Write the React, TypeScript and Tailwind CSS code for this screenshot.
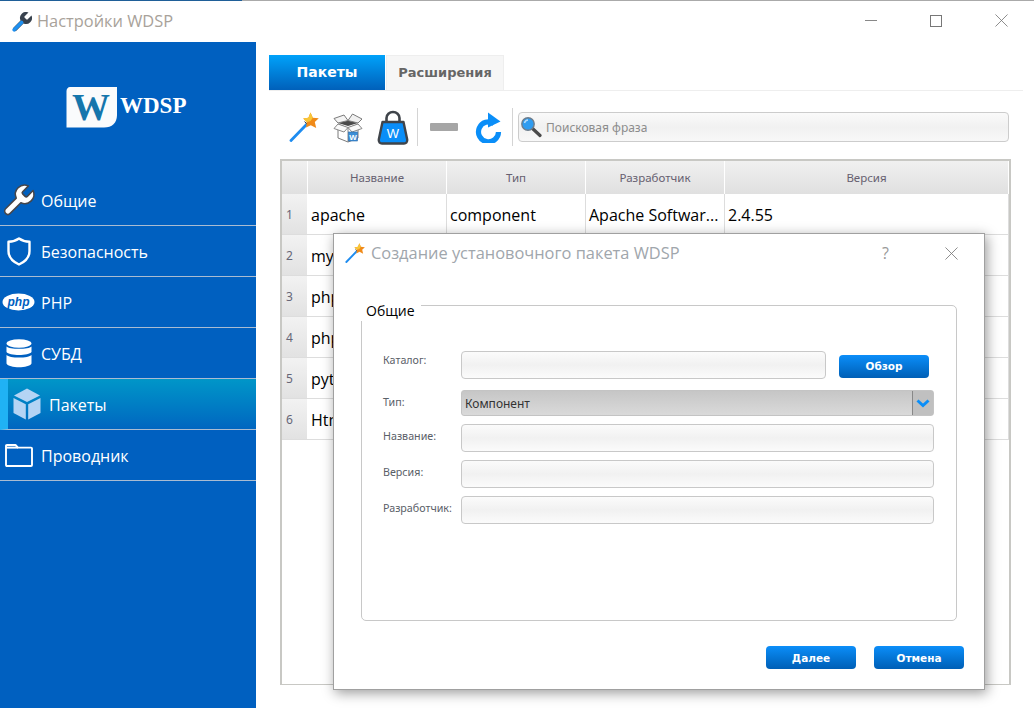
import type { ReactNode } from "react";

const uiFont = "[font-family:'Open_Sans','Noto_Sans',sans-serif]";
const smallFont = "[font-family:'Noto_Sans',sans-serif]";
const boldFont = "[font-family:'DejaVu_Sans',sans-serif]";

const wrenchPath =
  "M14.7 6.3a1 1 0 0 0 0 1.4l1.6 1.6a1 1 0 0 0 1.4 0l3.77-3.77a6 6 0 0 1-7.94 7.94l-6.91 6.91a2.12 2.12 0 0 1-3-3l6.91-6.91a6 6 0 0 1 7.94-7.94l-3.76 3.76z";

function WrenchSmall() {
  return (
    <svg width="20" height="20" viewBox="2 2 20 20">
      <path d={wrenchPath} fill="#38424e" />
      <path d="M4.2 19.8 L11.6 12.4" stroke="#1e90f0" strokeWidth="3.6" strokeLinecap="round" />
    </svg>
  );
}

function WrenchNav() {
  return (
    <svg width="37" height="37" viewBox="0 0 24 24">
      <path d={wrenchPath} fill="#fff" stroke="#44464c" strokeWidth="1" strokeLinejoin="round" />
    </svg>
  );
}

function ShieldIcon() {
  return (
    <svg width="24" height="29" viewBox="0 0 24 29">
      <path d="M12 1.5 C15 3.6 18.5 4.6 22.5 4.8 V14 C22.5 20.5 18 24.8 12 27.5 C6 24.8 1.5 20.5 1.5 14 V4.8 C5.5 4.6 9 3.6 12 1.5 Z" fill="none" stroke="#fff" strokeWidth="2.4" strokeLinejoin="round" />
    </svg>
  );
}

function PhpIcon() {
  return (
    <svg width="33" height="18" viewBox="0 0 33 18">
      <ellipse cx="16.5" cy="9" rx="16" ry="8.5" fill="#fff" />
      <text x="16.5" y="12.6" textAnchor="middle" fontFamily="'Liberation Sans',sans-serif" fontWeight="700" fontStyle="italic" fontSize="12" fill="#0060c0">php</text>
    </svg>
  );
}

function DbIcon() {
  return (
    <svg width="26" height="29" viewBox="0 0 26 29" fill="#fff">
      <ellipse cx="13" cy="4.5" rx="12.5" ry="4.2" />
      <path d="M0.5 7.5 C3 10.6 23 10.6 25.5 7.5 V13 C23 17 3 17 0.5 13 Z" />
      <path d="M0.5 16 C3 19.4 23 19.4 25.5 16 V24.5 C23 29.5 3 29.5 0.5 24.5 Z" />
    </svg>
  );
}

function CubeIcon() {
  return (
    <svg width="28" height="32" viewBox="0 0 28 32" fill="#b4d4f4">
      <path d="M14 0.5 L27 7.5 L14 14 L1 7.5 Z" />
      <path d="M0.5 10 L12.8 16.2 V31.5 L0.5 25 Z" />
      <path d="M27.5 10 L15.2 16.2 V31.5 L27.5 25 Z" />
    </svg>
  );
}

function FolderIcon() {
  return (
    <svg width="28" height="23" viewBox="0 0 28 23">
      <path d="M1 4 V2 Q1 1 2 1 H10.5 L13 3.6 H26 Q27 3.6 27 4.6 V21 Q27 22 26 22 H2 Q1 22 1 21 Z" fill="none" stroke="#fff" strokeWidth="1.9" strokeLinejoin="round" />
      <path d="M1 3.6 H13" stroke="#fff" strokeWidth="2" />
    </svg>
  );
}

function WandIcon({ size }: { size: number }) {
  return (
    <svg width={size} height={size} viewBox="0 0 30 30">
      <path d="M2 28.5 L18 12" stroke="#1e8cf0" strokeWidth="2.8" strokeLinecap="round" />
      <path d="M18.2 12.2 L15.5 9.6" stroke="#33383e" strokeWidth="1" />
      <path d="M21.5 0.5 L23.8 5.8 L29.8 6.2 L25.8 10 L27.2 16 L21.8 13.2 L17 15.6 L17.8 10.2 L14.2 6.6 L19.4 5.8 Z" fill="#f08a18" />
      <path d="M21.5 0.5 L23.8 5.8 L21.6 9 L17.8 10.2 L14.2 6.6 L19.4 5.8 Z" fill="#f8c638" />
    </svg>
  );
}

function BoxIcon() {
  return (
    <svg width="30" height="33" viewBox="0 0 30 33">
      <path d="M5 13 L15 17 L25 13 V27 L15 31 L5 27 Z" fill="#fff" stroke="#7a7a7a" strokeWidth="1" />
      <path d="M15 17 V31" stroke="#8a8a8a" strokeWidth="1" />
      <path d="M5 12 L15 9.5 L25 12 L15 15 Z" fill="#4a4a4a" />
      <path d="M5 12 L1 7.5 L11 4 L15 9.5 Z" fill="#f4f4f4" stroke="#7a7a7a" strokeWidth="1" />
      <path d="M25 12 L29 8 L19.5 3 L15 9.5 Z" fill="#f0f0f0" stroke="#7a7a7a" strokeWidth="1" />
      <path d="M5 13 L1 17.5 L11 21 L15 16.5 Z" fill="#fafafa" stroke="#8a8a8a" strokeWidth="1" />
      <path d="M25 13 L29 17.5 L19 21 L15 16.5 Z" fill="#fafafa" stroke="#8a8a8a" strokeWidth="1" />
      <rect x="15.5" y="21" width="9" height="9" fill="#3d8ed6" stroke="#2a6aa8" strokeWidth="0.6" />
      <text x="20" y="28.5" textAnchor="middle" fontFamily="'Liberation Sans',sans-serif" fontWeight="700" fontSize="8" fill="#fff">W</text>
    </svg>
  );
}

function BagIcon() {
  return (
    <svg width="32" height="35" viewBox="0 0 32 35">
      <path d="M9.5 13 V8 C9.5 4.5 12.5 2 16 2 C19.5 2 22.5 4.5 22.5 8 V13" fill="none" stroke="#3f444a" strokeWidth="2.6" />
      <path d="M5.5 12 H26.5 L30.2 29.5 C30.6 32 29 33.5 27 33.5 H5 C3 33.5 1.4 32 1.8 29.5 Z" fill="#0a8ef8" stroke="#3f444a" strokeWidth="2.4" strokeLinejoin="round" />
      <text x="16" y="28" textAnchor="middle" fontFamily="'Liberation Sans',sans-serif" fontWeight="400" fontSize="13" fill="#fff">W</text>
    </svg>
  );
}

function RefreshIcon() {
  return (
    <svg width="29" height="31" viewBox="0 0 29 31">
      <path d="M20 11.5 A10 10 0 1 0 24.5 20" fill="none" stroke="#0a8ef8" strokeWidth="5.2" />
      <path d="M14 0.5 L26.5 9.5 L14 15.5 Z" fill="#0a8ef8" />
    </svg>
  );
}

function SearchIcon() {
  return (
    <svg width="22" height="22" viewBox="0 0 22 22">
      <path d="M12.5 12.5 L20 19.5" stroke="#4a4a4a" strokeWidth="3.2" strokeLinecap="round" />
      <circle cx="8" cy="8" r="6.2" fill="#2f9cf0" stroke="#6d7d8c" strokeWidth="1.4" />
      <path d="M4.5 7 A4 4 0 0 1 8 4" fill="none" stroke="#b5dcfa" strokeWidth="1.4" />
    </svg>
  );
}

function CloseGlyph({ size }: { size: number }) {
  return (
    <svg width={size} height={size} viewBox="0 0 14 14">
      <path d="M0.5 0.5 L13.5 13.5 M13.5 0.5 L0.5 13.5" stroke="#777" strokeWidth="0.9" />
    </svg>
  );
}

function Logo() {
  return (
    <svg width="52" height="41" viewBox="0 0 52 41">
      <path d="M4 0 H51 V28 C51 36 46 40.5 38 40.5 H0.5 V4 C0.5 2 2 0 4 0 Z" fill="#fafbfc" />
      <text x="25" y="33" textAnchor="middle" fontFamily="'Liberation Serif',serif" fontWeight="700" fontSize="38" fill="#1576ac">W</text>
    </svg>
  );
}

const navItems: { label: string; icon: ReactNode; active?: boolean }[] = [
  { label: "Общие", icon: <WrenchNav /> },
  { label: "Безопасность", icon: <ShieldIcon /> },
  { label: "PHP", icon: <PhpIcon /> },
  { label: "СУБД", icon: <DbIcon /> },
  { label: "Пакеты", icon: <CubeIcon />, active: true },
  { label: "Проводник", icon: <FolderIcon /> },
];

// only the first row is fully visible, the rest sit behind the dialog
const rows = [
  ["apache", "component", "Apache Softwar...", "2.4.55"],
  ["mysql", "", "", ""],
  ["php", "", "", ""],
  ["phpmyadmin", "", "", ""],
  ["python", "", "", ""],
  ["Htmleditor", "", "", ""],
];

const columns = ["Название", "Тип", "Разработчик", "Версия"];

function Input({ className }: { className: string }) {
  return <div className={`h-[28px] rounded-[4px] border border-[#c8c8c8] bg-gradient-to-b from-[#fbfbfb] via-[#f1f1f1] to-[#fbfbfb] ${className}`} />;
}

function BlueButton({ label }: { label: string }) {
  return (
    <button className={`flex h-[23px] w-[90px] items-center justify-center rounded-[4px] bg-gradient-to-b from-[#0c8ef9] to-[#005fb6] pt-[2px] text-[10.5px] font-bold text-white ${boldFont}`}>
      {label}
    </button>
  );
}

function FormLabel({ label, up }: { label: string; up: string }) {
  return <span className={`w-[78px] text-[10.7px] text-[#5a6068] ${smallFont} ${up}`}>{label}</span>;
}

export default function App() {
  return (
    <div className={`relative flex h-[708px] w-[1034px] flex-col overflow-hidden bg-white ${uiFont}`}>
      {/* Window frame top line */}
      <div className="flex h-px shrink-0 bg-[#aaaaaa]">
        <div className="w-[242px] bg-[#1f5f98]" />
      </div>

      {/* Title bar */}
      <header className="flex h-[41px] shrink-0 items-center pl-[12px]">
        <WrenchSmall />
        <span className="ml-[5px] text-[16.4px] text-[#a8a29a]">Настройки WDSP</span>
        <div className="ml-auto flex items-center pb-[2px] pr-[26px]">
          <div className="h-px w-[12px] bg-[#888]" />
          <div className="ml-[53px] h-[12px] w-[12px] border border-[#777]" />
          <div className="ml-[53px]"><CloseGlyph size={13} /></div>
        </div>
      </header>

      <div className="flex min-h-0 flex-1">
        {/* Sidebar */}
        <aside className="w-[256px] shrink-0 bg-[#0060c0]">
          <div className="flex h-[133px] items-start justify-start pl-[66px] pt-[45px]">
            <Logo />
            <span className="ml-[2px] mt-[4px] text-[23px] font-bold leading-[30px] text-white [font-family:'Liberation_Serif',serif]">WDSP</span>
          </div>
          <nav>
            {navItems.map((item) => (
              <div
                key={item.label}
                className={
                  item.active
                    ? "flex h-[51px] items-center border-b border-[#a9bcd2] border-l-[8px] border-l-[#20b2f4] bg-gradient-to-b from-[#0096c8] to-[#0066c0]"
                    : "flex h-[51px] items-center border-b border-[#a9bcd2]"
                }
              >
                <div className={item.active ? "mr-[3px] flex w-[38px] justify-center" : "mr-[4px] flex w-[37px] justify-center"}>{item.icon}</div>
                <span className="pt-[2px] text-[16px] text-white">{item.label}</span>
              </div>
            ))}
          </nav>
        </aside>

        {/* Main */}
        <main className="min-w-0 flex-1 pl-[13px] pt-[13px]">
          <div className="flex h-[36px] w-[754px] border-b border-[#eeeeee]">
            <div className={`flex h-[35px] w-[116px] items-center justify-center bg-gradient-to-b from-[#00a2fa] to-[#0060ba] text-[14px] font-bold text-white ${boldFont}`}>Пакеты</div>
            <div className={`ml-px flex h-[35px] w-[118px] items-center justify-center border border-b-0 border-[#eeeeee] bg-[#f6f6f6] text-[13px] font-bold text-[#666] ${boldFont}`}>Расширения</div>
          </div>

          {/* Toolbar */}
          <div className="ml-[20px] mt-[17px] flex h-[38px] items-center">
            <WandIcon size={30} />
            <div className="ml-[14px]"><BoxIcon /></div>
            <div className="ml-[14px]"><BagIcon /></div>
            <div className="ml-[8px] h-[38px] w-px bg-[#d4d4d4]" />
            <div className="ml-[12px] h-[8px] w-[28px] rounded-[1px] bg-[#a6a6a6]" />
            <div className="ml-[16px]"><RefreshIcon /></div>
            <div className="ml-[9px] h-[38px] w-px bg-[#d4d4d4]" />
            <div className="ml-[5px] flex h-[30px] w-[491px] items-center rounded-[4px] border border-[#cccccc] bg-gradient-to-b from-[#fafafa] via-[#f1f1f1] to-[#f8f8f8] pl-[1px]">
              <SearchIcon />
              <span className={`ml-[4px] pt-[1px] text-[12px] text-[#8c8c8c] ${smallFont}`}>Поисковая фраза</span>
            </div>
          </div>

          {/* Table */}
          <div className="ml-[11px] mt-[13px] h-[526px] w-[731px] border-2 border-b border-[#c8c8c4]">
            <div className="grid h-[33px] grid-cols-[26px_139px_139px_139px_1fr]">
              <div className="border-r border-white bg-gradient-to-b from-[#f0f0f0] to-[#e0e0e0]" />
              {columns.map((col) => (
                <div key={col} className={`flex items-center justify-center border-r border-white bg-gradient-to-b from-[#f0f0f0] to-[#e0e0e0] pt-[1px] text-[11.5px] text-[#666070] ${smallFont}`}>
                  {col}
                </div>
              ))}
            </div>
            {rows.map((row, i) => (
              <div key={row[0]} className="grid h-[41px] grid-cols-[26px_139px_139px_139px_1fr] border-b border-[#dddddd]">
                <div className={`flex items-center border-r border-white bg-gradient-to-b from-[#f2f2f2] to-[#e2e2e2] pl-[4px] pt-[2px] text-[12px] text-[#667] ${smallFont}`}>{i + 1}</div>
                {row.map((cell, j) => (
                  <div key={j} className="flex items-center truncate border-r border-[#dddddd] pl-[3px] pt-[2px] text-[16px] text-black">
                    {cell}
                  </div>
                ))}
              </div>
            ))}
          </div>
        </main>
      </div>

      {/* Dialog */}
      <div className="absolute left-[333px] top-[233px] flex h-[457px] w-[652px] flex-col border border-[#a0a0a0] bg-white shadow-[2px_3px_12px_rgba(0,0,0,0.4)]">
        <div className="flex h-[40px] shrink-0 items-center pb-[2px] pl-[11px]">
          <WandIcon size={20} />
          <span className="ml-[6px] text-[16.4px] text-[#a0a6ac]">Создание установочного пакета WDSP</span>
          <span className="ml-auto text-[16px] text-[#999]">?</span>
          <div className="ml-[56px] mr-[26px]"><CloseGlyph size={13} /></div>
        </div>

        <div className="relative mx-[27px] mt-[31px] h-[316px] w-[596px] rounded-[5px] border border-[#c8c8c8] pl-[21px] pt-[45px]">
          <span className="absolute left-[-1px] top-[-5px] bg-white pl-[5px] pr-[6px] text-[14px] leading-[20px] text-black">Общие</span>

          <div className="flex h-[28px] items-center">
            <FormLabel label="Каталог:" up="-mt-[10px]" />
            <Input className="w-[365px]" />
            <div className="ml-[13px] mt-[2px]"><BlueButton label="Обзор" /></div>
          </div>

          <div className="mt-[11px] flex h-[26px] items-center">
            <FormLabel label="Тип:" up="-mt-[2px]" />
            <div className={`flex h-[26px] w-[473px] items-center rounded-[3px] border border-[#c4c4c4] bg-gradient-to-b from-[#c6c6c6] to-[#dadada] pl-[3px] text-[12px] text-[#333] ${smallFont}`}>
              <span className="pt-[2px]">Компонент</span>
              <div className="ml-auto flex h-full w-[21px] items-center justify-center border-l border-[#888] bg-[#c0c0c0]">
                <svg width="14" height="9" viewBox="0 0 14 9"><path d="M1.5 1.5 L7 6.5 L12.5 1.5" fill="none" stroke="#0a8ef8" strokeWidth="3" /></svg>
              </div>
            </div>
          </div>

          <div className="mt-[8px] flex h-[28px] items-center">
            <FormLabel label="Название:" up="-mt-[4px]" />
            <Input className="w-[473px]" />
          </div>
          <div className="mt-[8px] flex h-[28px] items-center">
            <FormLabel label="Версия:" up="-mt-[4px]" />
            <Input className="w-[473px]" />
          </div>
          <div className="mt-[8px] flex h-[28px] items-center">
            <FormLabel label="Разработчик:" up="-mt-[4px]" />
            <Input className="w-[473px]" />
          </div>
        </div>

        <div className="mt-[25px] flex justify-end gap-[18px] pr-[20px]">
          <BlueButton label="Далее" />
          <BlueButton label="Отмена" />
        </div>
      </div>
    </div>
  );
}
